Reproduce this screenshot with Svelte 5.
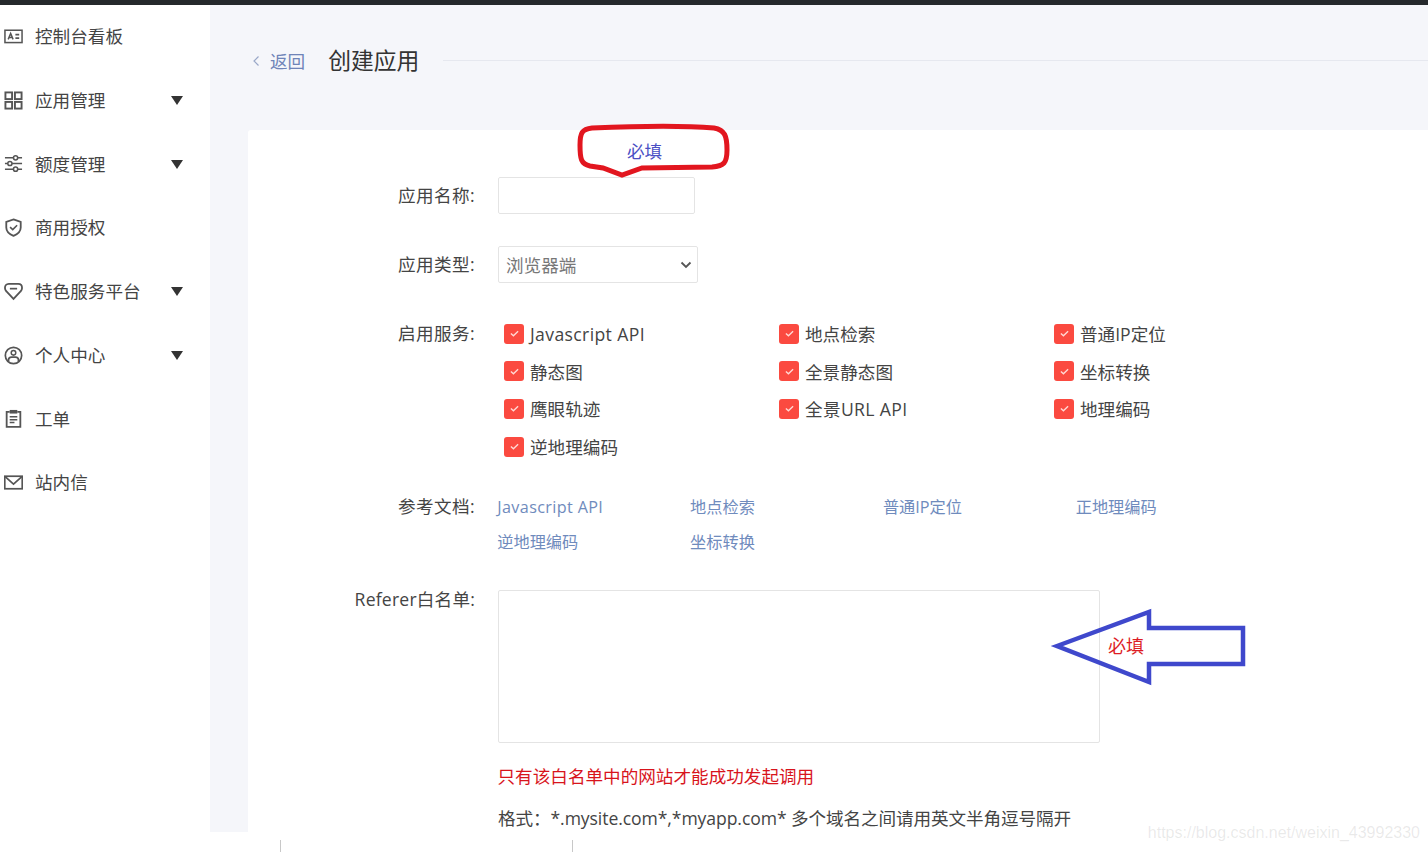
<script>
  const menu = [
    { label: '控制台看板', icon: 'card' },
    { label: '应用管理', icon: 'grid', arrow: true },
    { label: '额度管理', icon: 'sliders', arrow: true },
    { label: '商用授权', icon: 'shield' },
    { label: '特色服务平台', icon: 'gem', arrow: true },
    { label: '个人中心', icon: 'user', arrow: true },
    { label: '工单', icon: 'clip' },
    { label: '站内信', icon: 'mail' }
  ];
  const services = [
    'Javascript API', '地点检索', '普通IP定位',
    '静态图', '全景静态图', '坐标转换',
    '鹰眼轨迹', '全景URL API', '地理编码',
    '逆地理编码'
  ];
  const docs = ['Javascript API', '地点检索', '普通IP定位', '正地理编码', '逆地理编码', '坐标转换'];
  const hasLatin = (s) => /[A-Za-z]{3}/.test(s);
</script>

<div class="page">
  <div class="topbar"></div>
  <div class="body">
    <aside class="sidebar">
      {#each menu as item}
        <div class="menu-item">
          <svg class="menu-icon" viewBox="0 0 20 20" fill="none" stroke="#555" stroke-width="2">
            {#if item.icon === 'card'}
              <rect x="1" y="3.4" width="18" height="13" stroke-width="1.6" />
              <path d="M4.4 13 L7 6.8 L9.6 13 M5.4 11 H8.6" stroke-width="1.5" />
              <path d="M12 8 H16 M12 11.6 H16" stroke-width="1.8" />
            {:else if item.icon === 'grid'}
              <rect x="1.5" y="1.5" width="7" height="7" />
              <rect x="11.5" y="1.5" width="7" height="7" />
              <rect x="1.5" y="11.5" width="7" height="7" />
              <rect x="11.5" y="11.5" width="7" height="7" />
            {:else if item.icon === 'sliders'}
              <path d="M1 4 H10 M14.5 4 H19 M1 10 H4 M8.5 10 H19 M1 16 H10 M14.5 16 H19" stroke-width="1.7" />
              <circle cx="12.2" cy="4" r="2.2" stroke-width="1.6" />
              <circle cx="6.2" cy="10" r="2.2" stroke-width="1.6" />
              <circle cx="12.2" cy="16" r="2.2" stroke-width="1.6" />
            {:else if item.icon === 'shield'}
              <path d="M10 1.4 L17.6 4 V10 C17.6 14.4 14 17.2 10 18.8 C6 17.2 2.4 14.4 2.4 10 V4 Z" stroke-width="1.9" />
              <path d="M6.4 9.6 L9.2 12.2 L13.8 7.6" stroke-width="1.7" />
            {:else if item.icon === 'gem'}
              <path d="M5 2 H15 C17.6 2 19 4 19 6.4 C19 8 18.4 9 17.4 10 L10 17.8 L2.6 10 C1.6 9 1 8 1 6.4 C1 4 2.4 2 5 2 Z" stroke-width="1.9" />
              <path d="M6.2 7 H13.8" stroke-width="1.8" />
            {:else if item.icon === 'user'}
              <circle cx="10" cy="10" r="8.6" stroke-width="1.8" />
              <circle cx="10" cy="7.2" r="2.4" stroke-width="1.6" />
              <path d="M4.8 16.4 V14.6 C4.8 12.6 6.4 11.6 8 11.6 H12 C13.6 11.6 15.2 12.6 15.2 14.6 V16.4" stroke-width="1.8" />
            {:else if item.icon === 'clip'}
              <path d="M6 3 H2.8 V18.8 H17.2 V3 H14" stroke-width="1.9" />
              <rect x="6" y="1" width="8" height="3.8" fill="#555" stroke="none" />
              <path d="M6 8.2 H14 M6 11.2 H14 M6 14.2 H11" stroke-width="1.6" />
            {:else}
              <rect x="0.8" y="3.4" width="18.4" height="13.2" stroke-width="1.8" />
              <path d="M1.2 3.8 L10 11.6 L18.8 3.8" stroke-width="1.8" />
            {/if}
          </svg>
          <span class="menu-label">{item.label}</span>
          {#if item.arrow}<span class="menu-arrow"></span>{/if}
        </div>
      {/each}
    </aside>

    <main class="main">
      <header class="head">
        <svg class="back-icon" viewBox="0 0 8 12" fill="none" stroke="#9aa8c8" stroke-width="1.2"><path d="M6.5 1.5 L2 6 L6.5 10.5" /></svg>
        <a class="back" href="#top">返回</a>
        <h1>创建应用</h1>
        <div class="head-rule"></div>
      </header>

      <section class="card">
        <div class="row row-name">
          <div class="label">应用名称:</div>
          <input class="name-input" type="text" />
        </div>
        <div class="row row-type">
          <div class="label">应用类型:</div>
          <div class="select">
            <span>浏览器端</span>
            <svg viewBox="0 0 12 8" fill="none" stroke="#555" stroke-width="1.8"><path d="M1.5 1.5 L6 6 L10.5 1.5" /></svg>
          </div>
        </div>
        <div class="row row-services">
          <div class="label">启用服务:</div>
          <div class="services">
            {#each services as s}
              <div class="service">
                <span class="check">
                  <svg viewBox="0 0 12 10" fill="none" stroke="#ffd9d4" stroke-width="1.5"><path d="M2 5 L4.8 7.6 L10 2.4" /></svg>
                </span>
                <span class="service-name" class:latin={hasLatin(s)}>{s}</span>
              </div>
            {/each}
          </div>
        </div>
        <div class="row row-docs">
          <div class="label">参考文档:</div>
          <div class="docs">
            {#each docs as d}
              <a class="doc" class:latin={hasLatin(d)} href="#top">{d}</a>
            {/each}
          </div>
        </div>
        <div class="row row-referer">
          <div class="label">Referer白名单:</div>
          <div class="referer">
            <textarea class="referer-box"></textarea>
            <p class="warn">只有该白名单中的网站才能成功发起调用</p>
            <p class="format">格式：*.mysite.com*,*myapp.com* 多个域名之间请用英文半角逗号隔开</p>
          </div>
        </div>
      </section>
    </main>
  </div>
  <div class="footer">
    <span class="tick tick-a"></span>
    <span class="tick tick-b"></span>
  </div>

  <!-- hand drawn marks on top of the screenshot -->
  <svg class="marks" viewBox="0 0 1428 852" fill="none">
    <path d="M592 128 C640 126 690 126 714 128 C725 130 727 136 727 150 C727 163 724 166 712 167 L642 168 L622 175 L603 168 L590 166 C581 164 580 159 580 145 C580 133 582 129 592 128 Z" stroke="#e2161f" stroke-width="5" />
    <path d="M1057 646 L1149 612 V628 H1243 V664 H1149 V682 Z" stroke="#3f48cc" stroke-width="4.5" />
  </svg>
  <span class="note note-blue">必填</span>
  <span class="note note-red">必填</span>
  <span class="watermark">https://blog.csdn.net/weixin_43992330</span>
</div>

<style>
  :global(body) {
    margin: 0;
    background: #fff;
  }

  .page {
    position: relative;
    width: 1428px;
    height: 852px;
    overflow: hidden;
    font-family: "Open Sans", "Noto Sans CJK SC", sans-serif;
    font-size: 17.6px;
    color: #444;
    display: flex;
    flex-direction: column;
  }

  .topbar {
    height: 5px;
    background: #25292c;
    flex: none;
  }

  .body {
    display: flex;
    height: 827px;
    flex: none;
  }

  .sidebar {
    width: 210px;
    flex: none;
    background: #fff;
  }

  .menu-item {
    height: 63.75px;
    margin-top: -0.5px;
    margin-bottom: 0.5px;
    display: flex;
    align-items: center;
    position: relative;
  }

  .menu-icon {
    width: 19px;
    height: 19px;
    margin-left: 4px;
    flex: none;
  }

  .menu-label {
    margin-left: 12px;
    margin-bottom: 1.5px;
    white-space: nowrap;
  }

  .menu-arrow {
    position: absolute;
    left: 171px;
    top: 50%;
    margin-top: -4px;
    border-left: 6.5px solid transparent;
    border-right: 6.5px solid transparent;
    border-top: 9px solid #333;
  }

  .main {
    flex: 1;
    background: #f5f6fa;
    padding-left: 38px;
    min-width: 0;
  }

  .head {
    height: 125px;
    display: flex;
    align-items: flex-start;
    padding-top: 37px;
    box-sizing: border-box;
  }

  .back-icon {
    width: 8px;
    height: 12px;
    margin: 13px 0 0 4px;
  }

  .back {
    margin-left: 10px;
    color: #6f84b8;
    text-decoration: none;
    line-height: 38px;
  }

  .head h1 {
    margin: 0 0 0 23px;
    font-size: 22.8px;
    font-weight: 400;
    color: #333;
    line-height: 38px;
  }

  .head-rule {
    flex: 1;
    height: 1px;
    background: #e6e8ef;
    margin: 18px 0 0 24px;
  }

  .card {
    background: #fff;
    border-radius: 3px 0 0 0;
    height: 702px;
    padding-top: 47px;
    box-sizing: border-box;
    overflow: hidden;
  }

  .row {
    display: flex;
    align-items: flex-start;
    gap: 23px;
  }

  .label {
    width: 227px;
    flex: none;
    text-align: right;
    white-space: nowrap;
    line-height: 36px;
    letter-spacing: 0.4px;
  }

  .name-input {
    width: 197px;
    height: 37px;
    box-sizing: border-box;
    border: 1px solid #e4e4e4;
    border-radius: 2px;
    background: #fff;
    outline: none;
    padding: 0;
  }

  .row-type {
    margin-top: 32px;
  }

  .select {
    width: 200px;
    height: 37px;
    box-sizing: border-box;
    border: 1px solid #e4e4e4;
    border-radius: 2px;
    display: flex;
    align-items: center;
    justify-content: space-between;
    padding: 0 5px 0 7px;
    color: #777;
  }

  .select svg {
    width: 12px;
    height: 8px;
  }

  .row-services {
    margin-top: 32px;
  }

  .services {
    display: grid;
    grid-template-columns: repeat(3, 275px);
    grid-auto-rows: 37.6px;
    padding-left: 6px;
  }

  .service {
    display: flex;
    align-items: center;
    gap: 6px;
    white-space: nowrap;
  }

  .service-name.latin {
    letter-spacing: 0.37px;
  }

  .check {
    width: 20px;
    height: 20px;
    border-radius: 3px;
    background: #fb4a40;
    display: flex;
    align-items: center;
    justify-content: center;
  }

  .check svg {
    width: 11px;
    height: 9px;
  }

  .row-docs {
    margin-top: 23px;
  }

  .docs {
    display: grid;
    grid-template-columns: repeat(4, 192.8px);
    grid-auto-rows: 35px;
    padding-top: 2px;
    margin-left: -0.7px;
  }

  .doc {
    font-size: 16.2px;
    color: #6f8bbd;
    text-decoration: none;
    line-height: 35px;
    white-space: nowrap;
  }

  .doc.latin {
    letter-spacing: 0.35px;
  }

  .row-referer {
    margin-top: 30px;
  }

  .row-referer .label {
    line-height: 18px;
    letter-spacing: 0.2px;
  }

  .referer-box {
    display: block;
    width: 602px;
    height: 153px;
    box-sizing: border-box;
    border: 1px solid #e4e4e4;
    border-radius: 2px;
    outline: none;
    padding: 0;
    resize: none;
    background: #fff;
  }

  .warn {
    margin: 20px 0 0 -0.5px;
    color: #d8141c;
    line-height: 26px;
    white-space: nowrap;
  }

  .format {
    margin: 16px 0 0;
    line-height: 26px;
    white-space: nowrap;
    letter-spacing: -0.09px;
  }

  .footer {
    height: 20px;
    flex: none;
    background: #fff;
    position: relative;
  }

  .tick {
    position: absolute;
    top: 8px;
    bottom: 0;
    width: 1px;
    background: #c8c8c8;
  }

  .tick-a { left: 280px; }
  .tick-b { left: 572px; }

  .marks {
    position: absolute;
    inset: 0;
    width: 1428px;
    height: 852px;
    pointer-events: none;
  }

  .note {
    position: absolute;
    line-height: 24px;
    white-space: nowrap;
  }

  .note-blue {
    left: 627px;
    top: 139px;
    color: #4a4fc4;
  }

  .note-red {
    left: 1108px;
    top: 634px;
    font-size: 18px;
    color: #dd1c24;
  }

  .watermark {
    position: absolute;
    right: 8px;
    top: 823px;
    font-family: "Liberation Sans", sans-serif;
    font-size: 16px;
    line-height: 20px;
    color: rgba(120, 120, 120, 0.16);
    white-space: nowrap;
  }
</style>
